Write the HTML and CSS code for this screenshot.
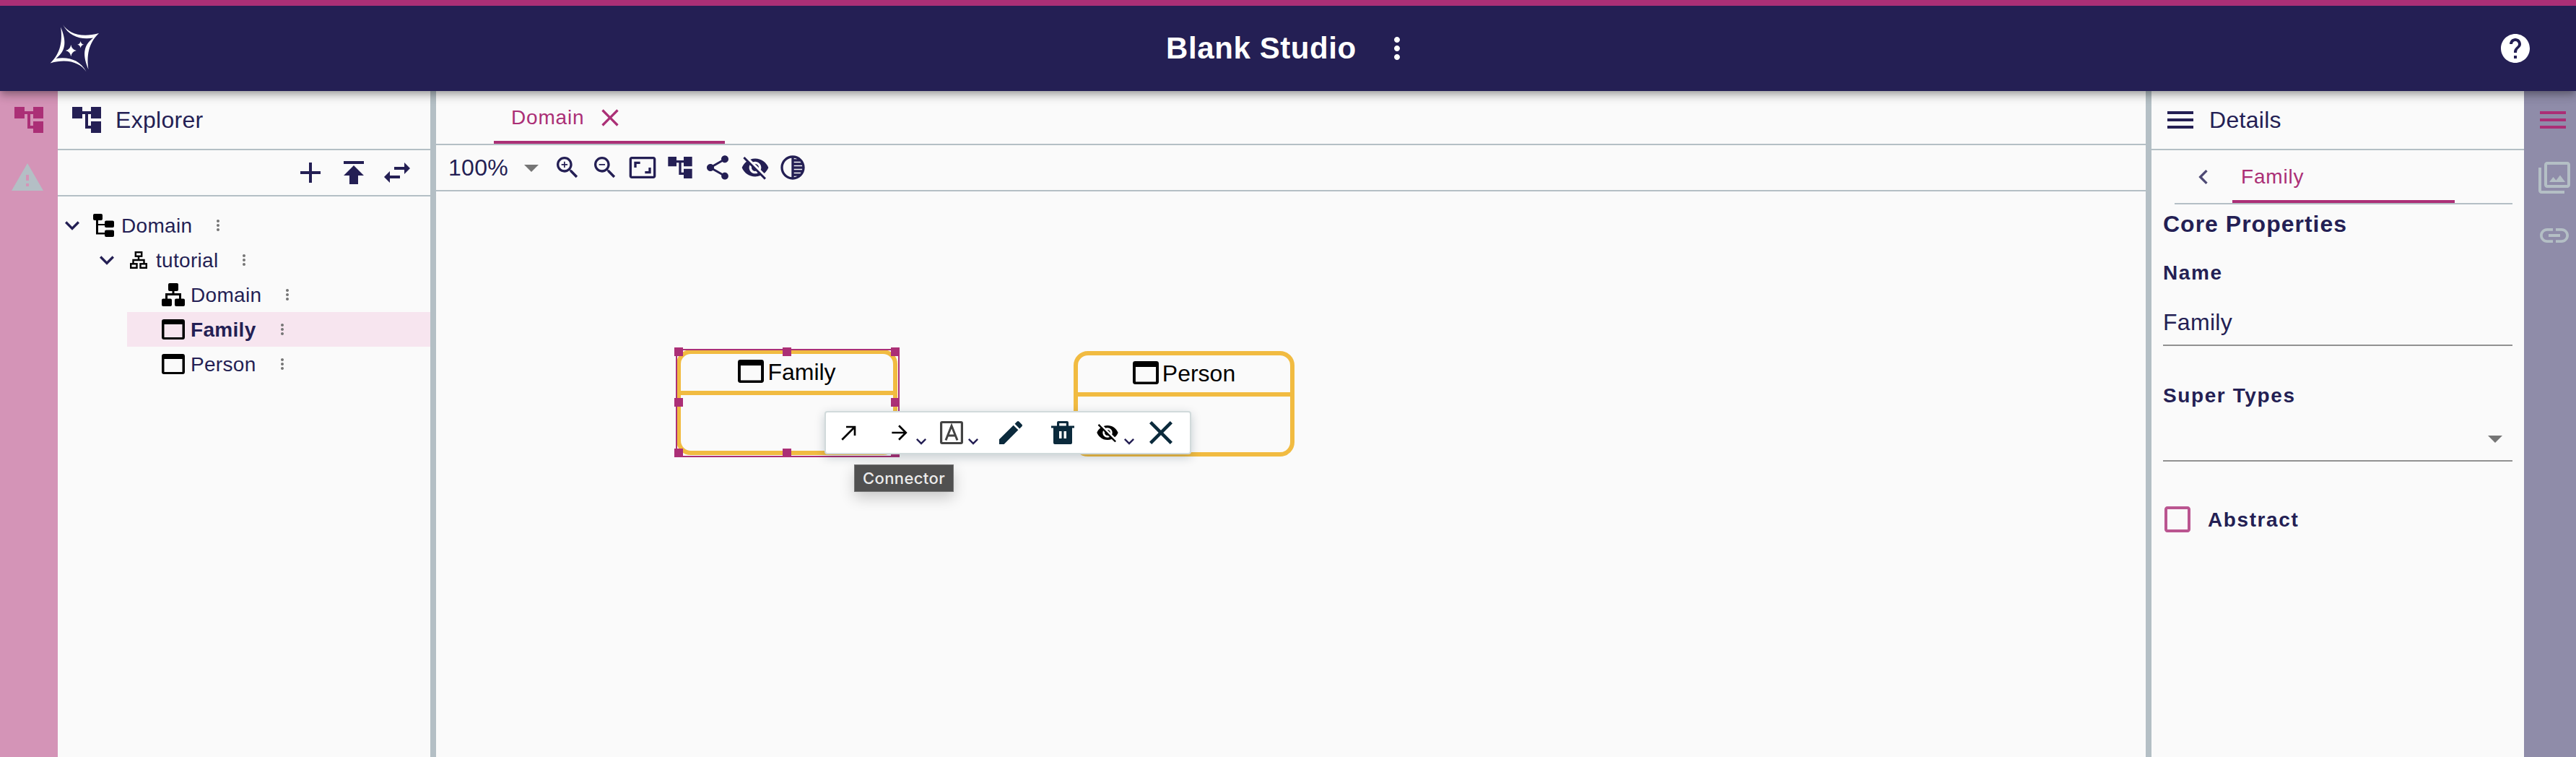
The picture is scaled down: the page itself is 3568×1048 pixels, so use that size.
FILE: index.html
```html
<!DOCTYPE html>
<html lang="en">
<head>
<meta charset="utf-8">
<title>Blank Studio</title>
<link rel="stylesheet" href="styles.css">
</head>
<body>
<svg class="defs" aria-hidden="true">
  <symbol id="account-tree" viewBox="0 0 24 24"><path d="M22 11V3h-7v3H9V3H2v8h7V8h2v10h4v3h7v-8h-7v3h-2V8h2v3z"/></symbol>
  <symbol id="warning" viewBox="0 0 24 24"><path d="M1 21h22L12 2 1 21zm12-3h-2v-2h2v2zm0-4h-2v-4h2v4z"/></symbol>
  <symbol id="more" viewBox="0 0 24 24"><path d="M12 8c1.1 0 2-.9 2-2s-.9-2-2-2-2 .9-2 2 .9 2 2 2zm0 2c-1.100 0-2 .9-2 2s.9 2 2 2 2-.9 2-2-.9-2-2-2zm0 6c-1.100 0-2 .9-2 2s.9 2 2 2 2-.9 2-2-.9-2-2-2z"/></symbol>
  <symbol id="expand" viewBox="0 0 24 24"><path d="M16.590 8.590 12 13.170 7.410 8.590 6 10l6 6 6-6z"/></symbol>
  <symbol id="drop" viewBox="0 0 24 24"><path d="m7 10 5 5 5-5z"/></symbol>
  <symbol id="close" viewBox="0 0 24 24"><path d="M19 6.410 17.590 5 12 10.590 6.410 5 5 6.410 10.590 12 5 17.590 6.410 19 12 13.410 17.590 19 19 17.590 13.410 12z"/></symbol>
  <symbol id="menu" viewBox="0 0 24 24"><path d="M3 18h18v-2H3v2zm0-5h18v-2H3v2zm0-7v2h18V6H3z"/></symbol>
  <symbol id="eye-off" viewBox="0 0 24 24"><path d="M12 7c2.760 0 5 2.240 5 5 0 .65-.13 1.260-.36 1.830l2.920 2.920c1.510-1.260 2.700-2.890 3.430-4.750-1.730-4.390-6-7.500-11-7.500-1.400 0-2.740.25-3.980.7l2.160 2.160C10.740 7.130 11.350 7 12 7zM2 4.270l2.280 2.280.46.46C3.080 8.300 1.780 10.020 1 12c1.730 4.390 6 7.500 11 7.500 1.550 0 3.030-.3 4.380-.84l.42.42L19.730 22 21 20.730 3.270 3 2 4.270zM7.530 9.800l1.550 1.550c-.05.21-.08.43-.08.65 0 1.660 1.340 3 3 3 .22 0 .44-.03.65-.08l1.550 1.550c-.67.33-1.410.53-2.200.53-2.760 0-5-2.240-5-5 0-.79.2-1.530.53-2.200zm4.310-.78 3.150 3.150.02-.16c0-1.660-1.340-3-3-3l-.17.010z"/></symbol>
  <symbol id="window" viewBox="0 0 32 28" preserveAspectRatio="none"><path fill-rule="evenodd" d="M3 0h26a3 3 0 0 1 3 3v22a3 3 0 0 1-3 3H3a3 3 0 0 1-3-3V3a3 3 0 0 1 3-3zm.5 7v18h25V7z"/></symbol>
</svg>

<header class="topbar">
  <svg class="logo" viewBox="0 0 90 84"><path d="M27 10C35 22 52 29 77 22 62 36 60 54 62.500 72 55 54 54 40 69 28.500 52 31 36 27 27 10zM59.600 75.400C51.600 63.400 34.600 56.400 9.600 63.400 24.600 49.400 26.600 31.400 24.100 13.400 31.600 31.400 32.600 45.400 17.600 56.900 34.600 54.400 50.600 58.400 59.600 75.400z"/><path d="M38.300 38q1 6.500 7.500 8-6.500 1.500-7.500 8-1-6.500-7.500-8 6.500-1.500 7.500-8zM51.600 33q.7 4 4.500 4.700-3.800.8-4.500 4.800-.7-4-4.500-4.800 3.800-.7 4.500-4.700z"/></svg>
  <div class="project">
    <h1>Blank Studio</h1>
    <svg class="i48"><use href="#more"/></svg>
  </div>
  <svg class="i48 help" viewBox="0 0 24 24"><path d="M12 2C6.480 2 2 6.480 2 12s4.480 10 10 10 10-4.480 10-10S17.520 2 12 2zm1 17h-2v-2h2v2zm2.070-7.750-.9.92C13.450 12.900 13 13.500 13 15h-2v-.5c0-1.100.45-2.100 1.170-2.830l1.240-1.260c.37-.36.59-.86.59-1.410 0-1.100-.9-2-2-2s-2 .9-2 2H8c0-2.210 1.790-4 4-4s4 1.790 4 4c0 .88-.36 1.680-.93 2.250z"/></svg>
</header>

<div class="workbench">
  <nav class="rail rail-left">
    <svg class="i48 active"><use href="#account-tree"/></svg>
    <svg class="i48 idle"><use href="#warning"/></svg>
  </nav>

  <aside class="explorer">
    <div class="panel-head"><svg class="i48"><use href="#account-tree"/></svg><h2>Explorer</h2></div>
    <div class="explorer-tools">
      <svg class="i48" viewBox="0 0 24 24"><path d="M19 13h-6v6h-2v-6H5v-2h6V5h2v6h6v2z"/></svg>
      <svg class="i48" viewBox="0 0 24 24"><path d="M5 4v2h14V4H5zm0 10h4v6h6v-6h4l-7-7-7 7z"/></svg>
      <svg class="i48" viewBox="0 0 24 24"><path d="M6.990 11 3 15l3.990 4v-3H14v-2H6.990v-3zM21 9l-3.990-4v3H10v2h7.010v3L21 9z"/></svg>
    </div>
    <div class="tree">
      <div class="row l0">
        <svg class="i40"><use href="#expand"/></svg>
        <svg class="kind" viewBox="0 0 32 32"><path d="M3 0h9a2 2 0 0 1 2 2v5a2 2 0 0 1-2 2H8v5h9v-2.500a2 2 0 0 1 2-2h9a2 2 0 0 1 2 2V17a2 2 0 0 1-2 2h-9a2 2 0 0 1-2-2v-1H8v10h9v-1.500a2 2 0 0 1 2-2h9a2 2 0 0 1 2 2V30a2 2 0 0 1-2 2h-9a2 2 0 0 1-2-2v-1.500H5V9H3a2 2 0 0 1-2-2V2a2 2 0 0 1 2-2z"/></svg>
        <span>Domain</span><svg class="i24"><use href="#more"/></svg>
      </div>
      <div class="row l1">
        <svg class="i40"><use href="#expand"/></svg>
        <svg class="kind" viewBox="0 0 32 32"><g fill="none" stroke="#000" stroke-width="2.400"><rect x="11.800" y="5.200" width="8.400" height="5.500"/><path d="M16 10.500V16M8.500 22v-6h15v6"/><rect x="5.200" y="21.300" width="8.300" height="5.500"/><rect x="18.500" y="21.300" width="8.300" height="5.500"/></g></svg>
        <span>tutorial</span><svg class="i24"><use href="#more"/></svg>
      </div>
      <div class="row l2">
        <svg class="kind" viewBox="0 0 32 32"><path d="M11 0h10a2 2 0 0 1 2 2v7a2 2 0 0 1-2 2h-3.500v3H27v7.500h3a2 2 0 0 1 2 2V30a2 2 0 0 1-2 2H20a2 2 0 0 1-2-2v-6.500a2 2 0 0 1 2-2h4V17H8v4.500h4a2 2 0 0 1 2 2V30a2 2 0 0 1-2 2H2a2 2 0 0 1-2-2v-6.500a2 2 0 0 1 2-2h3V14h9.500v-3H11a2 2 0 0 1-2-2V2a2 2 0 0 1 2-2z"/></svg>
        <span>Domain</span><svg class="i24"><use href="#more"/></svg>
      </div>
      <div class="row l2 selected">
        <svg class="kind win"><use href="#window"/></svg>
        <span>Family</span><svg class="i24"><use href="#more"/></svg>
      </div>
      <div class="row l2">
        <svg class="kind win"><use href="#window"/></svg>
        <span>Person</span><svg class="i24"><use href="#more"/></svg>
      </div>
    </div>
  </aside>

  <div class="splitter"></div>

  <main class="editor">
    <div class="tabs">
      <div class="tab"><span>Domain</span><svg class="i40"><use href="#close"/></svg></div>
    </div>
    <div class="diagram-tools">
      <div class="zoom"><span>100%</span><svg class="i48"><use href="#drop"/></svg></div>
      <svg class="i40" viewBox="0 0 24 24"><path d="M15.500 14h-.79l-.28-.27C15.410 12.590 16 11.110 16 9.500 16 5.910 13.090 3 9.500 3S3 5.910 3 9.500 5.910 16 9.500 16c1.610 0 3.090-.59 4.230-1.570l.27.28v.79l5 4.990L20.490 19l-4.990-5zm-6 0C7.010 14 5 11.990 5 9.500S7.010 5 9.500 5 14 7.010 14 9.500 11.990 14 9.500 14zM12 10h-2v2H9v-2H7V9h2V7h1v2h2v1z"/></svg>
      <svg class="i40" viewBox="0 0 24 24"><path d="M15.500 14h-.79l-.28-.27C15.410 12.590 16 11.110 16 9.500 16 5.910 13.090 3 9.500 3S3 5.910 3 9.500 5.910 16 9.500 16c1.610 0 3.090-.59 4.230-1.570l.27.28v.79l5 4.990L20.490 19l-4.990-5zm-6 0C7.010 14 5 11.990 5 9.500S7.010 5 9.500 5 14 7.010 14 9.500 11.990 14 9.500 14zM7 9h5v1H7z"/></svg>
      <svg class="i40" viewBox="0 0 24 24"><path d="M19 12h-2v3h-3v2h5v-5zM7 9h3V7H5v5h2V9zm14-6H3c-1.100 0-2 .9-2 2v14c0 1.100.9 2 2 2h18c1.100 0 2-.9 2-2V5c0-1.100-.9-2-2-2zm0 16.010H3V4.990h18v14.020z"/></svg>
      <svg class="i40"><use href="#account-tree"/></svg>
      <svg class="i40" viewBox="0 0 24 24"><path d="M18 16.080c-.76 0-1.440.3-1.960.77L8.910 12.700c.05-.23.09-.46.09-.7s-.04-.47-.09-.7l7.050-4.110c.54.5 1.250.81 2.040.81 1.660 0 3-1.340 3-3s-1.340-3-3-3-3 1.340-3 3c0 .24.040.47.090.7L8.040 9.810C7.500 9.310 6.790 9 6 9c-1.660 0-3 1.340-3 3s1.340 3 3 3c.79 0 1.500-.31 2.040-.81l7.120 4.160c-.05.21-.08.43-.08.65 0 1.610 1.310 2.920 2.920 2.920s2.920-1.310 2.920-2.920-1.310-2.920-2.920-2.920z"/></svg>
      <svg class="i40"><use href="#eye-off"/></svg>
      <svg class="i40" viewBox="0 0 24 24"><path d="M12 2C6.480 2 2 6.480 2 12s4.480 10 10 10 10-4.480 10-10S17.520 2 12 2zm-1 17.930c-3.940-.49-7-3.850-7-7.930s3.050-7.440 7-7.930v15.860zm2-15.860c1.030.13 2 .45 2.870.93H13v-.93zM13 7h5.240c.25.31.48.65.68 1H13V7zm0 3h6.740c.08.33.15.66.19 1H13v-1zm0 9.930V19h2.870c-.87.48-1.840.8-2.870.93zM18.240 17H13v-1h5.920c-.2.35-.43.69-.68 1zm1.500-3H13v-1h6.930c-.04.34-.11.67-.19 1z"/></svg>
    </div>
    <div class="canvas">
      <div class="node family">
        <div class="node-head"><svg><use href="#window"/></svg><span>Family</span></div>
      </div>
      <div class="node person">
        <div class="node-head"><svg><use href="#window"/></svg><span>Person</span></div>
      </div>
      <div class="selection">
        <i class="h nw"></i><i class="h n"></i><i class="h ne"></i><i class="h w"></i><i class="h e"></i><i class="h sw"></i><i class="h s"></i><i class="h se"></i>
      </div>
      <div class="palette">
        <div class="tool single"><svg class="i32" viewBox="0 0 24 24"><path d="M9 5v2h6.590L4 18.590 5.410 20 17 8.410V15h2V5z"/></svg></div>
        <div class="tool"><svg class="i32" viewBox="0 0 24 24"><path d="m12 4-1.410 1.410L16.170 11H4v2h12.170l-5.580 5.590L12 20l8-8z"/></svg><svg class="more-tools"><use href="#expand"/></svg></div>
        <div class="tool"><svg class="i32 label" viewBox="0 0 32 32"><path fill-rule="evenodd" d="M3 0h26a3 3 0 0 1 3 3v26a3 3 0 0 1-3 3H3a3 3 0 0 1-3-3V3a3 3 0 0 1 3-3zm.2 3v26h25.600V3z"/><path d="m8 26.500 8-20 8 20M11 20h10" fill="none" stroke="#434343" stroke-width="3"/></svg><svg class="more-tools"><use href="#expand"/></svg></div>
        <div class="tool wide"><svg class="i32" viewBox="3 3 18 18"><path d="M3 17.250V21h3.750L17.810 9.940l-3.750-3.750L3 17.250zM20.710 7.040c.39-.39.39-1.020 0-1.410l-2.340-2.340c-.39-.39-1.020-.39-1.410 0l-1.830 1.830 3.750 3.750 1.830-1.830z"/></svg></div>
        <div class="tool wide"><svg class="i32" viewBox="0 0 32 32"><path fill-rule="evenodd" d="M10 0h12a2 2 0 0 1 2 2v4.500h8v3h-3V30a2 2 0 0 1-2 2H5a2 2 0 0 1-2-2V9.500H0v-3h8V2a2 2 0 0 1 2-2zm1.200 3v3.500h9.600V3zM11 14v10h3.500V14zm6.500 0v10H21V14z"/></svg></div>
        <div class="tool"><svg class="i32"><use href="#eye-off"/></svg><svg class="more-tools"><use href="#expand"/></svg></div>
        <div class="tool single"><svg class="i32 dark" viewBox="5 5 14 14"><use href="#close" width="24" height="24"/></svg></div>
      </div>
      <div class="tooltip">Connector</div>
    </div>
  </main>

  <div class="splitter"></div>

  <aside class="details">
    <div class="panel-head"><svg class="i48"><use href="#menu"/></svg><h2>Details</h2></div>
    <div class="page-tabs">
      <svg class="i40" viewBox="0 0 24 24"><path d="M15.410 7.410 14 6l-6 6 6 6 1.410-1.410L10.830 12z"/></svg>
      <div class="page-tab">Family</div>
    </div>
    <form class="form">
      <h3>Core Properties</h3>
      <label class="caption">Name</label>
      <div class="input">Family</div>
      <label class="caption types">Super Types</label>
      <div class="select"><svg class="i48"><use href="#drop"/></svg></div>
      <div class="check">
        <svg class="i48" viewBox="0 0 24 24"><path d="M19 5v14H5V5h14m0-2H5c-1.100 0-2 .9-2 2v14c0 1.100.9 2 2 2h14c1.100 0 2-.9 2-2V5c0-1.100-.9-2-2-2z"/></svg>
        <label class="caption">Abstract</label>
      </div>
    </form>
  </aside>

  <nav class="rail rail-right">
    <svg class="i48 active"><use href="#menu"/></svg>
    <svg class="i48 idle" viewBox="0 0 24 24"><path d="m15.960 10.290-2.750 3.540-1.960-2.360L8.500 15h11l-3.540-4.710zM3 5H1v16c0 1.100.9 2 2 2h16v-2H3V5zm18-4H7c-1.100 0-2 .9-2 2v14c0 1.100.9 2 2 2h14c1.100 0 2-.9 2-2V3c0-1.100-.9-2-2-2zm0 16H7V3h14v14z"/></svg>
    <svg class="i48 idle" viewBox="0 0 24 24"><path d="M3.900 12c0-1.710 1.390-3.100 3.100-3.100h4V7H7c-2.760 0-5 2.240-5 5s2.240 5 5 5h4v-1.900H7c-1.710 0-3.100-1.390-3.100-3.100zM8 13h8v-2H8v2zm9-6h-4v1.900h4c1.710 0 3.100 1.390 3.100 3.100s-1.390 3.100-3.100 3.100h-4V17h4c2.760 0 5-2.240 5-5s-2.240-5-5-5z"/></svg>
  </nav>
</div>
</body>
</html>
```
FILE: styles.css
```css
:root {
  --navy: #241f54;
  --pink: #ab2f76;
  --line: #b4bfc5;
  --paper: #fafafa;
  --node: #f1bb41;
}

* { box-sizing: border-box; }

body {
  margin: 0;
  height: 1048px;
  display: flex;
  flex-direction: column;
  overflow: hidden;
  background: var(--paper);
  color: var(--navy);
  font-family: "Liberation Sans", Arial, sans-serif;
}

h1, h2, h3 { margin: 0; font-weight: 400; }
svg { display: block; flex: none; fill: currentColor; }
.defs { position: absolute; width: 0; height: 0; }
.i48 { width: 48px; height: 48px; }
.i40 { width: 40px; height: 40px; }
.i32 { width: 32px; height: 32px; }
.i24 { width: 24px; height: 24px; }

/* Top bar */
.topbar {
  position: relative;
  z-index: 2;
  flex: none;
  height: 126px;
  padding: 0 60px;
  display: grid;
  grid-template-columns: 1fr auto 1fr;
  align-items: center;
  border-top: 8px solid var(--pink);
  background: var(--navy);
  color: #fff;
  box-shadow: 0 4px 8px -2px rgba(0, 0, 0, .2), 0 8px 10px rgba(0, 0, 0, .14), 0 2px 20px rgba(0, 0, 0, .12);
}
.logo { width: 90px; height: 84px; margin-top: -2px; }
.project {
  width: 350px;
  padding-left: 6px;
  display: flex;
  align-items: center;
  justify-content: space-between;
}
.project h1 {
  font-size: 42px;
  line-height: 48px;
  font-weight: 700;
  letter-spacing: .6px;
  white-space: nowrap;
}
.help { justify-self: end; }

/* Frame */
.workbench { flex: 1; min-height: 0; display: flex; }
.splitter { width: 8px; flex: none; background: var(--line); }
.rail {
  flex: none;
  padding: 16px 0 0 16px;
  display: flex;
  flex-direction: column;
  gap: 32px;
}
.rail-left { width: 80px; background: #d494b7; }
.rail-right { width: 72px; background: #8f8ca9; }
.rail .active { color: var(--pink); }
.rail .idle { color: var(--line); margin-left: -2px; }
.rail-right .idle { margin-left: 2px; }

.panel-head {
  height: 82px;
  padding-left: 16px;
  display: flex;
  align-items: center;
  gap: 16px;
  border-bottom: 2px solid var(--line);
}
.panel-head h2 { font-size: 32px; line-height: 40px; letter-spacing: .3px; }

/* Explorer */
.explorer { width: 516px; flex: none; }
.explorer-tools {
  height: 64px;
  padding-right: 22px;
  display: flex;
  align-items: center;
  justify-content: flex-end;
  gap: 12px;
  border-bottom: 2px solid var(--line);
}
.tree { padding-top: 16px; }
.row {
  height: 48px;
  display: flex;
  align-items: center;
  font-size: 28px;
  letter-spacing: .3px;
}
.row.l1 { margin-left: 48px; }
.row.l2 { margin-left: 96px; padding-left: 48px; }
.row span { padding-top: 2px; }
.row .i40 { margin-right: 8px; }
.row .i24 { margin-left: 24px; color: #757575; }
.row.selected { background: #f7e5ef; font-weight: 700; }
.kind { width: 32px; height: 32px; margin-right: 8px; color: #000; }
.kind.win { height: 28px; }

/* Editor */
.editor { flex: 1; min-width: 0; display: flex; flex-direction: column; }
.tabs {
  height: 75px;
  padding-left: 80px;
  display: flex;
  border-bottom: 2px solid var(--line);
}
.tab {
  width: 320px;
  padding-left: 24px;
  display: flex;
  align-items: center;
  gap: 16px;
  color: var(--pink);
  font-size: 28px;
  letter-spacing: .8px;
  box-shadow: inset 0 -4px var(--pink);
}
.diagram-tools {
  height: 64px;
  padding-left: 17px;
  display: flex;
  align-items: center;
  gap: 12px;
  border-bottom: 2px solid var(--line);
}
.zoom {
  width: 139px;
  margin-right: -6px;
  display: flex;
  align-items: center;
  justify-content: space-between;
  font-size: 32px;
  letter-spacing: .3px;
}
.zoom svg { color: #757575; }

/* Diagram canvas: elements sit at free coordinates */
.canvas { position: relative; flex: 1; overflow: hidden; }
.node {
  position: absolute;
  width: 306px;
  height: 146px;
  border: 6px solid var(--node);
  border-radius: 20px;
  background: var(--paper);
}
.node.family { left: 333px; top: 219px; }
.node.person { left: 883px; top: 221px; }
.node-head {
  height: 57px;
  padding-bottom: 3px;
  display: flex;
  align-items: center;
  justify-content: center;
  gap: 5px;
  border-bottom: 6px solid var(--node);
  color: #000;
  font-size: 32px;
}
.node-head span { padding-top: 2px; }
.node-head svg { width: 36px; height: 32px; }
.selection {
  position: absolute;
  left: 332px;
  top: 218px;
  width: 310px;
  height: 150px;
  border: 2px solid var(--pink);
}
.h { position: absolute; width: 12px; height: 12px; background: var(--pink); }
.nw, .w, .sw { left: -4px; }
.n, .s { left: 146px; }
.ne, .e, .se { right: -2px; }
.nw, .n, .ne { top: -4px; }
.w, .e { top: 66px; }
.sw, .s, .se { bottom: -2px; }

.palette {
  position: absolute;
  left: 538px;
  top: 304px;
  width: 508px;
  height: 60px;
  display: flex;
  align-items: center;
  border: 2px solid #d1dadb;
  border-radius: 4px;
  background: #fff;
  color: #000;
  box-shadow: 0 4px 14px rgba(11, 42, 60, .22);
}
.tool {
  position: relative;
  flex: none;
  width: 72px;
  height: 56px;
  padding-left: 14px;
  display: flex;
  align-items: center;
}
.tool.single { padding-left: 16px; }
.tool.wide { padding-left: 24px; color: #0b2a3c; }
.label { color: #434343; }
.dark { color: #0b2a3c; }
.more-tools {
  position: absolute;
  left: 46px;
  top: 26px;
  width: 28px;
  height: 28px;
  color: var(--navy);
}
.tooltip {
  position: absolute;
  left: 579px;
  top: 378px;
  width: 138px;
  height: 38px;
  display: flex;
  align-items: center;
  justify-content: center;
  border: 1px solid #737373;
  background: #505050;
  color: #ececec;
  font: 500 22px Inter, sans-serif;
  letter-spacing: .4px;
  box-shadow: 0 8px 20px rgba(0, 0, 0, .2);
}

/* Details */
.details { width: 516px; flex: none; }
.page-tabs {
  height: 75px;
  margin: 0 16px 0 32px;
  padding-left: 20px;
  display: flex;
  align-items: center;
  gap: 20px;
  border-bottom: 2px solid var(--line);
}
.page-tabs svg { opacity: .8; }
.page-tab {
  width: 308px;
  height: 73px;
  padding-left: 12px;
  color: var(--pink);
  font-size: 28px;
  line-height: 73px;
  letter-spacing: .8px;
  box-shadow: inset 0 -4px var(--pink);
}
.form { padding: 9px 16px 0; }
.form h3 { font-size: 32px; line-height: 36px; font-weight: 700; letter-spacing: 1px; }
.caption {
  display: block;
  margin-top: 34px;
  font-size: 28px;
  line-height: 32px;
  font-weight: 700;
  letter-spacing: 1.6px;
}
.caption.types { margin-top: 53px; }
.input {
  margin-top: 33px;
  padding-bottom: 12px;
  font-size: 32px;
  line-height: 38px;
  letter-spacing: .3px;
  border-bottom: 2px solid #919191;
}
.select {
  height: 75px;
  padding-top: 19px;
  display: flex;
  justify-content: flex-end;
  border-bottom: 2px solid #919191;
  color: #757575;
}
.check {
  margin: 56px 0 0 -4px;
  display: flex;
  align-items: center;
  gap: 18px;
}
.check svg { color: #ba5590; }
.check .caption { margin: 0; padding-top: 2px; }
```
